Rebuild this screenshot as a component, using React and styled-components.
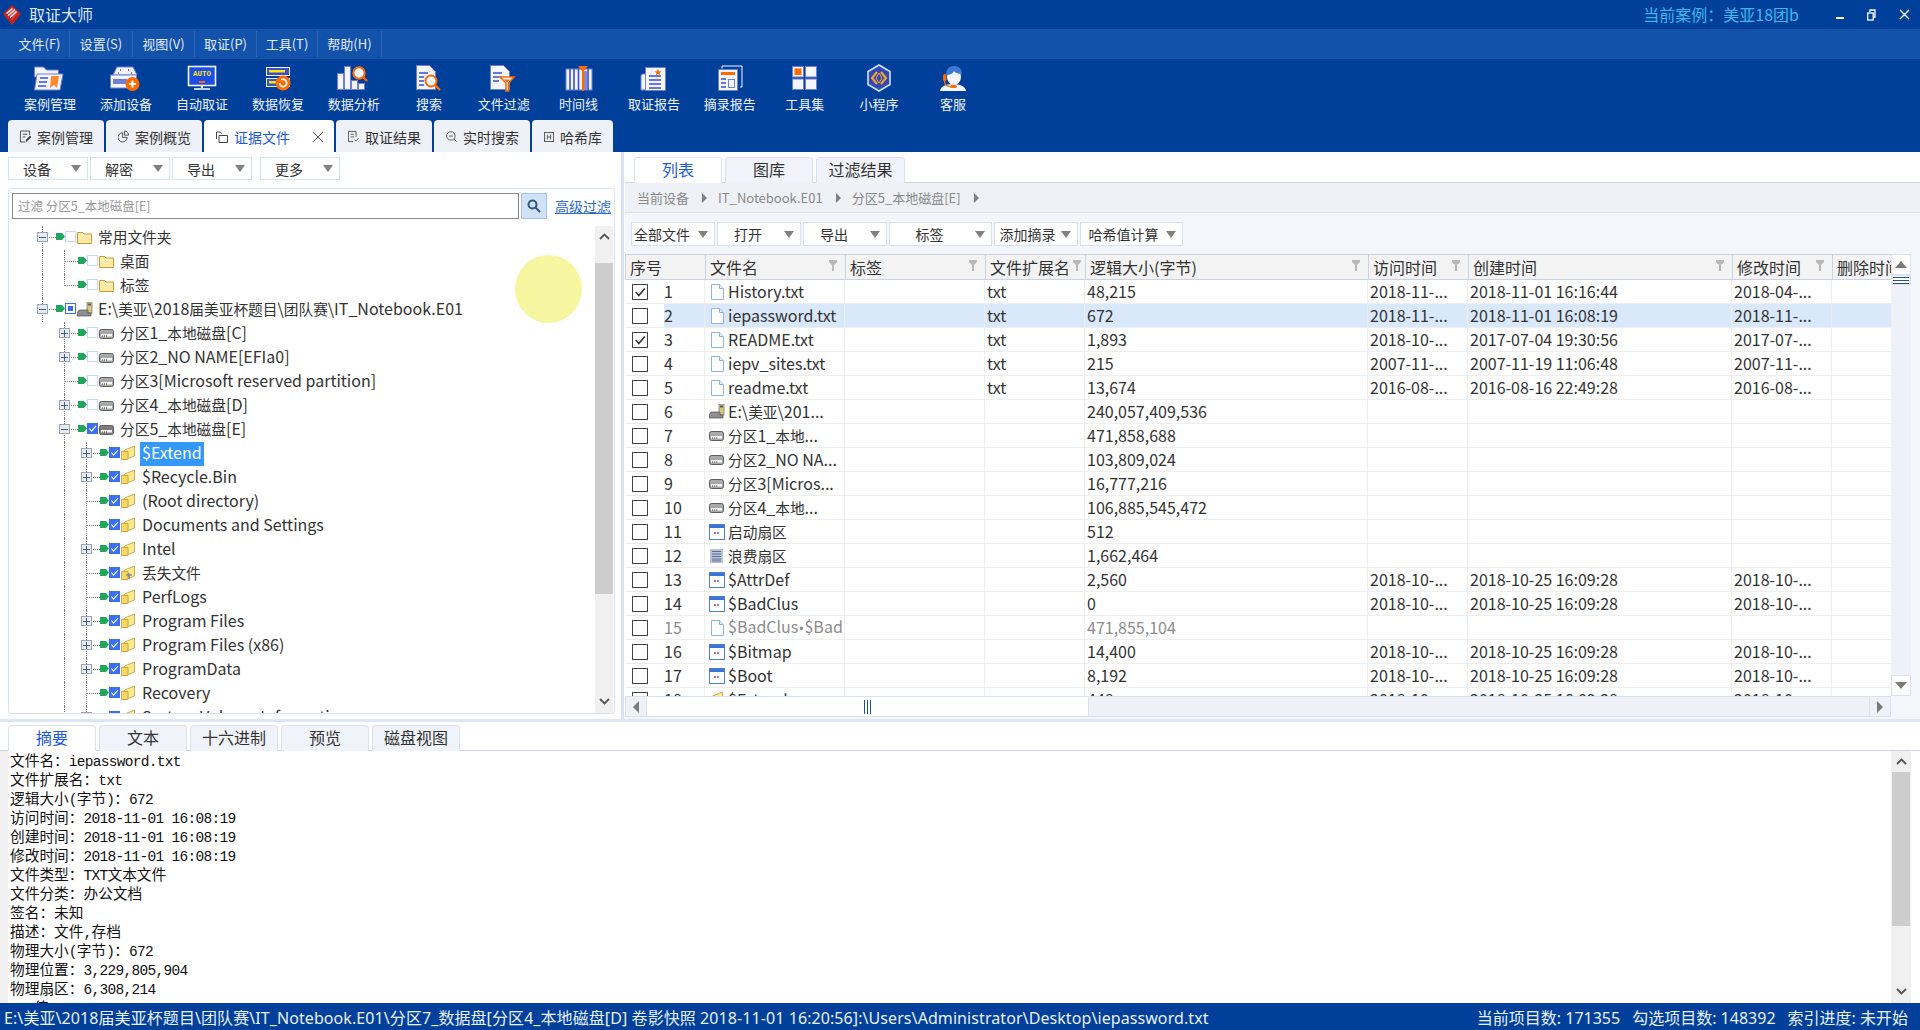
import React from 'react';
import styled, { createGlobalStyle } from 'styled-components';

const FONT = '"Noto Sans CJK SC", "Noto Sans", sans-serif';
const BLUE = '#00409b';
const LINE = '#d8e2f0';

const Global = createGlobalStyle`
  html, body { margin: 0; padding: 0; width: 1920px; height: 1030px; overflow: hidden; background: #fff; }
  * { box-sizing: border-box; }
`;

const Page = styled.div`
  width: 1920px; height: 1030px; display: flex; flex-direction: column; position: relative;
  font-family: ${FONT}; font-size: 16px; color: #333; background: #fff; overflow: hidden;
`;
const Han = styled.span`font-size: 14.7px; font-family: "Noto Sans CJK SC", sans-serif;`;
const Dot = styled.span`font-family: "Liberation Sans", sans-serif; font-size: 12px; margin: 0 1px;`;

/* ---------- title, menu ---------- */
const TitleBar = styled.div`
  height: 29px; background: ${BLUE}; display: flex; align-items: center; padding-left: 3px; color: #dbe6f6;
`;
const AppName = styled.span`margin-left: 8px; font-size: 16px; line-height: 29px;`;
const CaseName = styled.span`margin-left: auto; color: #3db8ef; font-size: 16px; line-height: 29px;`;
const WinButtons = styled.div`display: flex; align-items: center; margin-left: 37px; gap: 23px; padding-right: 10px; height: 29px;`;
const MenuBar = styled.div`height: 30px; background: #1252ab; display: flex; align-items: stretch; padding-top: 2px; padding-bottom: 2px;`;
const MenuItem = styled.div`
  display: flex; align-items: center; justify-content: center; width: ${p => p.$w}px; color: #e3ebf8; font-size: 13px;
  border-right: 1px solid #2d66b6; padding-bottom: 2px; padding-left: ${p => p.$pl || 0}px;
`;
const ToolBar = styled.div`height: 61px; background: ${BLUE}; display: flex; padding-left: 12px;`;
const Tool = styled.div`
  width: ${p => p.$w}px; flex: none; display: flex; flex-direction: column; align-items: center; padding-top: 5px; color: #eef3fb; font-size: 13px;
  span { line-height: 18px; margin-top: 3px; white-space: nowrap; }
  svg { display: block; }
`;

const TabStrip = styled.div`height: 32px; background: ${BLUE}; display: flex; gap: 2px; padding-left: 8px;`;
const MainTab = styled.div`
  width: ${p => p.$w}px; height: 32px; display: flex; align-items: center; gap: 6px; padding: 1px 11px 0 12px; font-size: 14px;
  border-radius: 4px 4px 0 0; background: ${p => (p.$active ? '#fff' : '#eef1f7')}; color: ${p => (p.$active ? '#1c58e2' : '#333')};
  white-space: nowrap;
  & > svg:last-child:not(:first-child) { margin-left: auto; }
`;

/* ---------- workspace ---------- */
const Workspace = styled.div`height: 567px; display: flex;`;
const LeftPane = styled.div`width: 621px; display: flex; flex-direction: column; padding: 5px 0 5px 8px;`;
const VSplit = styled.div`width: 3px; background: ${LINE};`;
const RightPane = styled.div`flex: 1; display: flex; flex-direction: column; padding-left: 1px; background: #fff;`;
const HSplit = styled.div`height: 3px; background: #dde6f3;`;

const ButtonRow = styled.div`display: flex; gap: ${p => p.$gap || 2}px;`;
const Drop = styled.div`
  width: ${p => p.$w}px; height: ${p => p.$h}px; margin-right: ${p => p.$after || 0}px; display: flex; align-items: center;
  background: #fff; border: 1px solid ${LINE}; font-size: 14px; color: #333; flex: none;
  span { flex: 1; text-align: center; white-space: nowrap; padding-right: ${p => p.$pr ?? 6}px; }
  i { width: 0; height: 0; margin-right: 6px; border-left: 5.5px solid transparent; border-right: 5.5px solid transparent; border-top: 7px solid #808080; flex: none; }
`;

const TreePanel = styled.div`
  margin-top: 8px; width: 607px; height: 526px; border: 1px solid ${LINE}; border-radius: 3px; display: flex; flex-direction: column; overflow: hidden;
`;
const FilterRow = styled.div`height: 37px; flex: none; display: flex; align-items: flex-start; padding: 4px 0 0 3px;`;
const FilterInput = styled.div`
  width: 507px; height: 26px; border: 1.5px solid #888; display: flex; align-items: center; padding: 0 0 2px 5px; color: #999; font-size: 12.5px; white-space: nowrap;
`;
const SearchBtn = styled.div`
  width: 26px; height: 26px; margin-left: 2px; background: #cfe2f8; border: 1px solid #a3c4ea; display: flex; align-items: center; justify-content: center;
`;
const AdvLink = styled.span`margin-left: 8px; font-size: 14px; line-height: 26px; color: #2a6bd8; text-decoration: underline; white-space: nowrap;`;
const TreeBody = styled.div`flex: 1; display: flex; min-height: 0;`;
const TreeList = styled.div`flex: 1; padding-left: 22px; overflow: hidden; min-width: 0;`;
const TreeRow = styled.div`height: 24px; display: flex; align-items: center; white-space: nowrap;`;
const Guide = styled.div`
  width: 22px; height: 24px; flex: none;
  &::before { content: ''; display: ${p => (p.$on ? 'block' : 'none')}; height: 100%; width: 0; margin-left: 11px; border-left: 1px dotted #7d7d7d; }
`;
const Conn = styled.div`
  width: 25px; height: 24px; flex: none; position: relative; display: flex; align-items: center;
  &::before { content: ''; position: absolute; left: 11px; top: 0; height: ${p => (p.$end ? '12px' : '24px')}; border-left: 1px dotted #7d7d7d; }
  &::after { content: ''; position: absolute; left: 12px; right: 0; top: 11px; border-top: 1px dotted #7d7d7d; }
`;
const Expander = styled.div`
  position: relative; z-index: 1; margin: -2px 0 0 6px; width: 11px; height: 10px; border: 1px solid #98a3b5; background: #e9ebef; display: flex; align-items: center; justify-content: center;
  svg { display: block; }
`;
const Marker = styled.svg`width: 9px; height: 7px; flex: none; margin-bottom: 3px;`;
const TreeCheck = styled.div`
  width: 11px; height: 11px; margin: 0 0 3px 0; flex: none; border: 1px solid ${p => (p.$s ? '#3b6ef0' : '#c6d6f4')};
  background: ${p => (p.$s === 'on' ? '#3b6ef0' : '#fff')}; display: flex; align-items: center; justify-content: center;
  svg { display: block; }
  b { display: block; width: 5px; height: 5px; background: #3b6ef0; }
`;
const TreeIcon = styled.span`width: 15px; height: 14px; margin: 0 6px 2px 1px; flex: none; svg { display: block; }`;
const TreeLabel = styled.span`
  height: 24px; line-height: 21px; padding: 0 2px; margin-left: -2px; font-size: 16px;
  background: ${p => (p.$sel ? '#3399ff' : 'transparent')}; color: ${p => (p.$sel ? '#fff' : '#333')};
`;
const GrayScroll = styled.div`
  width: 18px; margin-right: 1px; flex: none; background: #f0f0f0; display: flex; flex-direction: column; align-items: center;
`;
const Chevron = styled.div`
  height: ${p => p.$h}px; flex: none; display: flex; align-items: ${p => p.$align || 'center'}; justify-content: center; width: 100%;
  padding: ${p => p.$pt || 0}px 0 ${p => p.$pb || 0}px; svg { display: block; }
`;
const GrayThumb = styled.div`width: 18px; height: ${p => p.$h}px; flex: none; background: #cdcdcd;`;

const Spot = styled.div`
  position: absolute; left: 515px; top: 255px; width: 67px; height: 68px; border-radius: 50%; background: #f7f6a0; pointer-events: none;
`;

/* ---------- right pane ---------- */
const SubTabs = styled.div`height: 31px; flex: none; display: flex; gap: 3px; padding: 5px 0 0 9px; border-bottom: 1px solid #d0d4de;`;
const SubTab = styled.div`
  width: ${p => p.$w || 88}px; height: 26px; display: flex; align-items: center; justify-content: center; font-size: 16px; padding-bottom: 3px;
  border: 1px solid ${LINE}; border-bottom: none; border-radius: 4px 4px 0 0;
  background: ${p => (p.$active ? '#fff' : '#f0f3f9')}; color: ${p => (p.$active ? '#1c58e2' : '#333')};
`;
const Crumbs = styled.div`
  height: 30px; flex: none; background: #eef1f6; border-bottom: 1px solid ${LINE}; display: flex; align-items: center; padding-left: 12px; font-size: 13px; color: #8a8a8a; white-space: nowrap;
  i { width: 0; height: 0; margin: 0 11px 0 13px; border-top: 5px solid transparent; border-bottom: 5px solid transparent; border-left: 5px solid #808080; }
`;
const ListArea = styled.div`flex: 1; background: #f3f6fb; display: flex; flex-direction: column; min-height: 0;`;
const ListTools = styled.div`height: 41px; flex: none; display: flex; gap: 2px; padding: 9px 0 0 6px;`;
const TableWrap = styled.div`display: flex; width: 1286px; height: 442px; flex: none;`;
const TableCol = styled.div`width: 1266px; flex: none; display: flex; flex-direction: column; background: #fff; overflow: hidden;`;

const GRID = '39px 41px 140px 140px 100px 283px 100px 264px 100px 59px';
const HeadRow = styled.div`
  display: grid; grid-template-columns: 80px 140px 140px 100px 283px 100px 264px 100px 59px; height: 26px; flex: none;
  background: #f3f3f3; border-top: 1px solid #cbd3e3; border-bottom: 1px solid #cbd3e3; border-left: 1px solid #cbd3e3;
`;
const HeadCell = styled.div`
  display: flex; align-items: center; justify-content: space-between; padding: 0 0 0 4px; font-size: 16px; border-right: 1px solid #cbd3e3; overflow: hidden; white-space: nowrap; color: #333;
  svg { flex: none; margin: 0 ${p => (p.$tight ? 4 : 8)}px 4px ${p => (p.$tight ? -6 : 0)}px; position: relative; }
`;
const Row = styled.div`
  display: grid; grid-template-columns: ${GRID}; height: 24px; flex: none; border-bottom: 1px solid #eeeeee; color: ${p => (p.$dim ? '#8c8c8c' : '#333')};
`;
const Cell = styled.div`
  display: flex; align-items: center; padding-left: ${p => p.$pad ?? 2}px; overflow: hidden; white-space: nowrap; line-height: 23px;
  border-right: ${p => (p.$noLine ? 'none' : '1px solid #eeeeee')};
  background: ${p => (p.$sel ? '#d9e8fb' : 'transparent')};
`;
const RowCheck = styled.div`
  width: 16px; height: 16px; border: 1px solid #444; background: #fff; margin-left: 7px; display: flex; align-items: center; justify-content: center; svg { display: block; }
`;
const FileIcon = styled.span`width: 16px; height: 16px; flex: none; margin: 0 3px 0 0; svg { display: block; }`;
const NameText = styled.span`white-space: pre;`;

const VScroll = styled.div`width: 20px; flex: none; display: flex; flex-direction: column; background: #eef1f7;`;
const ScrollBtn = styled.div`
  width: 20px; height: ${p => p.$h}px; flex: none; border: 1px solid ${LINE}; background: #fff; display: flex; align-items: center; justify-content: center;
  svg { display: block; }
`;
const VTrack = styled.div`flex: 1; min-height: 0;`;
const HScroll = styled.div`width: 1266px; height: 21px; flex: none; display: flex; background: #eef1f7; border: 1px solid ${LINE};`;
const HThumb = styled.div`
  width: 442px; flex: none; background: #fff; border-right: 1px solid ${LINE}; display: flex; align-items: center; justify-content: center;
  svg { display: block; }
`;
const HBtn = styled.div`
  width: 21px; flex: none; background: ${p => (p.$plain ? '#fff' : '#eef1f7')}; display: flex; align-items: center; justify-content: center;
  border-${p => (p.$side === 'left' ? 'right' : 'left')}: 1px solid ${LINE};
  margin-${p => (p.$side === 'left' ? 'right' : 'left')}: ${p => (p.$side === 'left' ? 0 : 'auto')};
  svg { display: block; }
`;

/* ---------- bottom ---------- */
const DetailTabs = styled.div`height: 29px; flex: none; display: flex; gap: 3px; padding: 3px 0 0 8px; border-bottom: 1px solid #d0d4de;`;
const Detail = styled.div`height: 252px; flex: none; display: flex; overflow: hidden;`;
const Gutter = styled.div`width: 8px; flex: none; background: #f0f0f0;`;
const DetailText = styled.div`flex: 1; padding: 0 0 0 2px; font-size: 14.7px; color: #111; overflow: hidden; white-space: pre;`;
const DetailLine = styled.div`height: 19px; line-height: 18px;`;
const Mono = styled.span`font-family: "Liberation Mono", monospace; font-size: 14.5px; letter-spacing: -0.7px;`;
const DetailScroll = styled.div`
  width: 20px; flex: none; margin-right: 9px; background: #f0f0f0; display: flex; flex-direction: column; align-items: center;
`;
const StatusBar = styled.div`
  height: 27px; flex: none; background: ${BLUE}; color: #eaf0fa; display: flex; align-items: center; padding: 0 12px 0 4px; font-size: 16px; white-space: nowrap;
  font-family: "Noto Sans", "Noto Sans CJK SC", sans-serif;
`;
const StatusPath = styled.span`letter-spacing: 0.08px;`;
const StatusRight = styled.div`margin-left: auto; display: flex; gap: 12px;`;

/* ---------- drawings ---------- */
const W = '#f3f5ff', O = '#6f7fd2', B = '#3b4fd0', R = '#ff6a00', Y = '#ffe600';

const Ico = ({ children }) => <svg width="36" height="28" viewBox="0 0 36 28">{children}</svg>;

const toolIcons = [
  <Ico key="a">
    <path d="M2.5 3h9l3 3h12v7H2.5z" fill={W} stroke={O} />
    <path d="M5 10h26l-3 16H2.5z" fill={W} stroke={O} />
    <path d="M8 14h8M7 18h8M6 22h8" stroke={B} strokeWidth="1.6" />
    <path d="M19 12h8l-2 12-3-3-4 3z" fill="#ff8a30" />
  </Ico>,
  <Ico key="b">
    <path d="M5 11L9 3h16l4 8z" fill={W} stroke={O} />
    <rect x="2.5" y="11" width="26" height="13" fill={W} stroke={O} />
    <path d="M12 6h1M20 6h1M10 9h1M23 9h1" stroke={B} strokeWidth="1.6" />
    <rect x="5" y="15" width="14" height="5" fill="#6f7fd2" />
    <circle cx="24.5" cy="20" r="7" fill={R} />
    <path d="M21 20h7M24.5 16.5v7" stroke="#fff" strokeWidth="2" />
  </Ico>,
  <Ico key="c">
    <rect x="4.5" y="2.5" width="27" height="19" fill="#1a4ee6" stroke={W} strokeWidth="1.6" />
    <text x="18" y="12" textAnchor="middle" fontFamily="Liberation Mono, monospace" fontSize="7.5" fontWeight="700" fill={Y}>AUTO</text>
    <rect x="15" y="17" width="6" height="2" fill={R} />
    <path d="M17 22h2v2h-2z" fill={W} />
    <path d="M10 25h16" stroke={W} strokeWidth="1.6" />
  </Ico>,
  <Ico key="d">
    <rect x="6.5" y="3.5" width="23" height="8" fill={B} stroke={W} />
    <rect x="9" y="6" width="16" height="2.5" fill={Y} />
    <rect x="6.5" y="14.5" width="23" height="8" fill={B} stroke={W} />
    <rect x="9" y="17" width="10" height="2.5" fill={Y} />
    <circle cx="23" cy="19" r="7.5" fill={R} />
    <path d="M19.5 19a3.6 3.6 0 1 0 3.5-3.6h-2" fill="none" stroke="#fff" strokeWidth="1.7" />
  </Ico>,
  <Ico key="e">
    <rect x="1.5" y="9.5" width="6" height="16" fill={W} stroke={O} />
    <rect x="8.5" y="2.5" width="6" height="23" fill={W} stroke={O} />
    <rect x="15.5" y="16.5" width="6" height="9" fill={W} stroke={O} />
    <rect x="22.5" y="19.5" width="6" height="6" fill={W} stroke={O} />
    <circle cx="23" cy="9" r="5.7" fill={W} stroke={R} strokeWidth="2" />
    <path d="M27 13l4 4" stroke={R} strokeWidth="2.4" />
  </Ico>,
  <Ico key="f">
    <path d="M5.5 1.5h13l6 6v18h-19z" fill={W} stroke={O} />
    <path d="M8 9h9M8 13h5M8 17h5M8 21h5" stroke={B} strokeWidth="1.6" />
    <circle cx="20" cy="17" r="5.5" fill={W} stroke={R} strokeWidth="2" />
    <path d="M24 21l5 5" stroke={R} strokeWidth="2.4" />
  </Ico>,
  <Ico key="g">
    <path d="M4.5 1.5h13l6 6v18h-19z" fill={W} stroke={O} />
    <path d="M7 9h9M7 13h9M7 17h6" stroke={B} strokeWidth="1.6" />
    <path d="M14 13h14l-5.5 6v8h-2.5v-8z" fill={W} stroke={R} strokeWidth="1.6" />
    <path d="M18 15.5h6l-3 3z" fill={R} />
  </Ico>,
  <Ico key="h">
    <rect x="5" y="5" width="26" height="21" fill={W} stroke={O} />
    <path d="M9 5v21M13 5v21M17.5 5v21M27 5v21" stroke={B} strokeWidth="1.6" />
    <rect x="23" y="7" width="3" height="19" fill="#7f8ede" />
    <path d="M17 2h10l-5 6z" fill={R} />
    <rect x="21" y="7" width="2.2" height="20" fill={R} />
  </Ico>,
  <Ico key="i">
    <path d="M10 10H7a2 2 0 0 0-2 2v14h22" fill={W} stroke={O} />
    <rect x="9.5" y="3.5" width="20" height="23" fill={W} stroke={O} />
    <path d="M13 12h12M13 16h12M13 20h12M13 24h12" stroke={B} strokeWidth="1.6" />
    <path d="M22 5l1 2.2 2.3.2-1.7 1.5.5 2.3-2.1-1.2-2.1 1.2.5-2.3-1.7-1.5 2.3-.2z" fill={R} />
  </Ico>,
  <Ico key="j">
    <path d="M10 4.5V2h20v21h-2" fill="none" stroke={W} />
    <rect x="6.5" y="5.5" width="19" height="21" fill={W} stroke={O} />
    <rect x="9" y="8" width="14" height="3" fill={R} />
    <path d="M9 15h5M9 19h5M9 23h5" stroke={B} strokeWidth="1.6" />
    <rect x="16.5" y="15.5" width="6" height="8" fill={W} stroke={O} />
  </Ico>,
  <Ico key="k">
    <rect x="5.5" y="2.5" width="11" height="10.5" fill={W} stroke={O} />
    <rect x="7.5" y="4.5" width="7" height="6.5" fill={R} />
    <rect x="18.5" y="2.5" width="11" height="10.5" fill={W} stroke={O} />
    <rect x="5.5" y="15" width="11" height="10.5" fill={W} stroke={O} />
    <rect x="18.5" y="15" width="11" height="10.5" fill={W} stroke={O} />
  </Ico>,
  <Ico key="l">
    <path d="M18 1l11 6.5v13L18 27 7 20.500v-13z" fill="#3347b8" stroke="#cfe4ff" strokeWidth="1.6" />
    <path d="M16 8l-5 6 5 6M20 8l5 6-5 6" fill="none" stroke="#f5a91f" strokeWidth="2" />
    <path d="M18 9l-3 5 3 5 3-5z" fill="none" stroke="#f5a91f" strokeWidth="1" />
  </Ico>,
  <Ico key="m">
    <path d="M5 27c1-5 6-6.500 13-7 7 .5 12 2 13 7z" fill={W} />
    <ellipse cx="19" cy="13" rx="7" ry="8" fill={W} />
    <path d="M11 11c0-6 3-9 8-9s8 3 8 8c-3 0-7-1-8-3-1 2-3 4-8 4z" fill="#3d78d6" />
    <rect x="8" y="10" width="3.400" height="7" rx="1.500" fill={R} />
    <path d="M9.500 17c0 4 2 5.500 6 5.500" fill="none" stroke={R} strokeWidth="1.2" />
    <rect x="15" y="21" width="7" height="3" rx="1.500" fill={R} />
  </Ico>,
];

const Logo = () => (
  <svg width="18" height="20" viewBox="0 0 18 20">
    <path d="M9 0l9 9-9 11L0 9z" fill="#c8201e" />
    <path d="M9 2l6 6-6 7-3-3.500z" fill="#e23a30" />
    <path d="M3.500 8.500l6-5M5 10.500l7-6M7 12.500l6.500-6" stroke="#fff" strokeWidth="1.400" />
  </svg>
);

const Funnel = () => (
  <svg width="8" height="11" viewBox="0 0 8 11"><path d="M0 0h8v2L5 5v6H3V5L0 2z" fill="#b9b9b9" /></svg>
);

const FolderIcon = ({ open }) => (
  <svg width="15" height="14" viewBox="0 0 15 14">
    {open ? (
      <>
        <path d="M3.500 4l10-4v10l-10 4z" fill="#ffeb8c" stroke="#b99b3b" strokeWidth=".8" />
        <path d="M.5 5.500h6.500v8H.5z" fill="#fad864" stroke="#b99b3b" strokeWidth=".8" />
      </>
    ) : (
      <>
        <path d="M.5 2.500h5l1.500 1.500h7.500v9.500H.5z" fill="#ffe9a4" stroke="#c49a33" />
        <path d="M1.500 6h12" stroke="#fff6d0" />
      </>
    )}
  </svg>
);
const LostIcon = () => (
  <svg width="15" height="14" viewBox="0 0 15 14">
    <path d="M3.500 4l10-4v10l-10 4z" fill="#ffeb8c" stroke="#b99b3b" strokeWidth=".8" />
    <path d="M.5 5.500h6.500v8H.5z" fill="#fad864" stroke="#b99b3b" strokeWidth=".8" />
    <path d="M5 9h6M8 7v6" stroke="#8a8a8a" strokeWidth="1.500" />
  </svg>
);
const DiskIcon = ({ dark }) => (
  <svg width="15" height="14" viewBox="0 0 15 14">
    <rect x=".5" y="3.500" width="14" height="9" rx="2" fill={dark ? '#7e7e7e' : '#a8a8a8'} stroke="#5f5f5f" />
    <rect x="2" y="8" width="11" height="2.500" fill="#f4f4f4" />
    <path d="M3 10h6" stroke="#444" strokeDasharray="1 1" />
  </svg>
);
const ImageIcon = () => (
  <svg width="16" height="15" viewBox="0 0 16 15">
    <rect x="10" y="0" width="5" height="11" fill="#d9c87a" stroke="#6d6d6d" strokeWidth=".7" />
    <rect x="11" y="1.500" width="3" height="2" fill="#5b5b5b" />
    <path d="M2 8h9v3h3v3H0v-3z" fill="#8f8f8f" stroke="#4d4d4d" strokeWidth=".7" />
  </svg>
);
const PlainFile = () => (
  <svg width="16" height="16" viewBox="0 0 16 16">
    <path d="M2.500.5h8l4 4v11h-12z" fill="#fff" stroke="#8db4e2" />
    <path d="M10.500.5v4h4" fill="#e8f1fb" stroke="#8db4e2" />
  </svg>
);
const SysFile = () => (
  <svg width="16" height="16" viewBox="0 0 16 16">
    <rect x=".5" y=".5" width="15" height="15" fill="#fff" stroke="#4e80d0" />
    <rect x="1" y="1" width="14" height="3" fill="#3a74d8" />
    <path d="M5 9h2" stroke="#e06060" strokeWidth="2" />
    <path d="M8 9h2" stroke="#7090e0" strokeWidth="2" />
  </svg>
);
const ListFile = () => (
  <svg width="16" height="16" viewBox="0 0 16 16">
    <rect x="1" y="1" width="13" height="14" fill="#b9c3d6" />
    <path d="M3 3.500h9M3 6h9M3 8.500h9M3 11h9M3 13h9" stroke="#5a6f96" />
  </svg>
);
const Check = ({ c = '#fff', s = 9 }) => (
  <svg width={s} height={s} viewBox="0 0 10 10"><path d="M1.500 5l2.500 3 5-6" fill="none" stroke={c} strokeWidth="1.300" /></svg>
);
const Tri = ({ d }) => {
  const p = { up: 'M0 8l6-7 6 7z', down: 'M0 1h12L6 8z', left: 'M7 0v12L1 6z', right: 'M1 0v12l6-6z' }[d];
  const vert = d === 'up' || d === 'down';
  return <svg width={vert ? 12 : 8} height={vert ? 9 : 12} viewBox={vert ? '0 0 12 9' : '0 0 8 12'}><path d={p} fill="#7a7a7a" /></svg>;
};
const Chev = ({ d }) => (
  <svg width="11" height="7" viewBox="0 0 11 7">
    <path d={d === 'up' ? 'M1 6l4.500-4.500L10 6' : 'M1 1l4.500 4.500L10 1'} fill="none" stroke="#555" strokeWidth="1.800" />
  </svg>
);

const tabIcon = {
  edit: <svg width="12" height="13" viewBox="0 0 12 13" fill="none" stroke="#444"><path d="M10.500 5V.5h-10v12h5M3 4h5M3 7h3" /><path d="M6.500 12l.5-2 4-4 1 1-4 4z" fill="#444" /></svg>,
  pie: <svg width="12" height="13" viewBox="0 0 12 13" fill="none" stroke="#444"><path d="M5 2.500a5 5 0 1 0 5 5H5z" /><path d="M7 .5a4.500 4.500 0 0 1 4.500 4.500H7z" /></svg>,
  files: <svg width="12" height="12" viewBox="0 0 12 12" fill="none" stroke="#444"><path d="M.5 8V1h4l1 1.500" /><path d="M3 4.500h8.500v7H3z" /></svg>,
  result: <svg width="13" height="13" viewBox="0 0 13 13" fill="none" stroke="#444"><path d="M6 12.500H.5V.5h9V7M3 4h4M3 7h4M7.500 10l2 2 3-3.500" /></svg>,
  search: <svg width="13" height="13" viewBox="0 0 13 13" fill="none" stroke="#444"><circle cx="5.800" cy="5.800" r="5" /><path d="M9.500 9.500l3 3M3.500 6h4.500" /></svg>,
  hash: <svg width="12" height="12" viewBox="0 0 12 12" fill="none" stroke="#444"><rect x=".5" y=".5" width="11" height="11" /><path d="M4 3v6M8 3v6M4 6h4" /></svg>,
};

/* ---------- data ---------- */
const menus = [['文件(F)', 70, 10], ['设置(S)', 63], ['视图(V)', 62], ['取证(P)', 62], ['工具(T)', 61], ['帮助(H)', 64]];
const tools = [
  ['案例管理', 76], ['添加设备', 76], ['自动取证', 76], ['数据恢复', 76], ['数据分析', 75.5], ['搜索', 75], ['文件过滤', 74.5],
  ['时间线', 75], ['取证报告', 76], ['摘录报告', 75.5], ['工具集', 74.5], ['小程序', 74], ['客服', 74],
];
const mainTabs = [
  ['案例管理', 96, 'edit'], ['案例概览', 96, 'pie'], ['证据文件', 130, 'files', true], ['取证结果', 96, 'result'], ['实时搜索', 96, 'search'], ['哈希库', 81, 'hash'],
];

const tree = [
  { g: [], c: 'minus', s: '', i: 'folder', t: '常用文件夹' },
  { g: [true], c: 'leaf', s: '', i: 'folder', t: '桌面' },
  { g: [true], c: 'end', s: '', i: 'folder', t: '标签' },
  { g: [], c: 'minus', s: 'part', i: 'image', t: 'E:\\美亚\\2018届美亚杯题目\\团队赛\\IT_Notebook.E01' },
  { g: [false], c: 'plus', s: '', i: 'disk', t: '分区1_本地磁盘[C]' },
  { g: [false], c: 'plus', s: '', i: 'disk', t: '分区2_NO NAME[EFIa0]' },
  { g: [false], c: 'leaf', s: '', i: 'disk', t: '分区3[Microsoft reserved partition]' },
  { g: [false], c: 'plus', s: '', i: 'disk', t: '分区4_本地磁盘[D]' },
  { g: [false], c: 'minus', s: 'on', i: 'diskd', t: '分区5_本地磁盘[E]' },
  { g: [false, true], c: 'plus', s: 'on', i: 'open', t: '$Extend', sel: true },
  { g: [false, true], c: 'plus', s: 'on', i: 'open', t: '$Recycle.Bin' },
  { g: [false, true], c: 'leaf', s: 'on', i: 'open', t: '(Root directory)' },
  { g: [false, true], c: 'leaf', s: 'on', i: 'open', t: 'Documents and Settings' },
  { g: [false, true], c: 'plus', s: 'on', i: 'open', t: 'Intel' },
  { g: [false, true], c: 'leaf', s: 'on', i: 'lost', t: '丢失文件' },
  { g: [false, true], c: 'leaf', s: 'on', i: 'open', t: 'PerfLogs' },
  { g: [false, true], c: 'plus', s: 'on', i: 'open', t: 'Program Files' },
  { g: [false, true], c: 'plus', s: 'on', i: 'open', t: 'Program Files (x86)' },
  { g: [false, true], c: 'plus', s: 'on', i: 'open', t: 'ProgramData' },
  { g: [false, true], c: 'leaf', s: 'on', i: 'open', t: 'Recovery' },
  { g: [false, true], c: 'plus', s: 'on', i: 'open', t: 'System Volume Information' },
];

const treeIcons = {
  folder: <FolderIcon />, open: <FolderIcon open />, lost: <LostIcon />, disk: <DiskIcon />, diskd: <DiskIcon dark />, image: <ImageIcon />,
};
const fileIcons = { file: <PlainFile />, image: <ImageIcon />, disk: <DiskIcon />, sys: <SysFile />, list: <ListFile />, open: <FolderIcon open /> };

const D25 = '2018-10-25 16:09:28';
const rows = [
  ['file', 'History.txt', 'txt', '48,215', '2018-11-...', '2018-11-01 16:16:44', '2018-04-...', { on: true }],
  ['file', 'iepassword.txt', 'txt', '672', '2018-11-...', '2018-11-01 16:08:19', '2018-11-...', { sel: true }],
  ['file', 'README.txt', 'txt', '1,893', '2018-10-...', '2017-07-04 19:30:56', '2017-07-...', { on: true }],
  ['file', 'iepv_sites.txt', 'txt', '215', '2007-11-...', '2007-11-19 11:06:48', '2007-11-...'],
  ['file', 'readme.txt', 'txt', '13,674', '2016-08-...', '2016-08-16 22:49:28', '2016-08-...'],
  ['image', 'E:\\美亚\\201...', '', '240,057,409,536', '', '', ''],
  ['disk', '分区1_本地...', '', '471,858,688', '', '', ''],
  ['disk', '分区2_NO NA...', '', '103,809,024', '', '', ''],
  ['disk', '分区3[Micros...', '', '16,777,216', '', '', ''],
  ['disk', '分区4_本地...', '', '106,885,545,472', '', '', ''],
  ['sys', '启动扇区', '', '512', '', '', ''],
  ['list', '浪费扇区', '', '1,662,464', '', '', ''],
  ['sys', '$AttrDef', '', '2,560', '2018-10-...', D25, '2018-10-...'],
  ['sys', '$BadClus', '', '0', '2018-10-...', D25, '2018-10-...'],
  ['file', '$BadClus•$Bad', '', '471,855,104', '', '', '', { dim: true }],
  ['sys', '$Bitmap', '', '14,400', '2018-10-...', D25, '2018-10-...'],
  ['sys', '$Boot', '', '8,192', '2018-10-...', D25, '2018-10-...'],
  ['open', '$Extend', '', '448', '2018-10-...', D25, '2018-10-...'],
];

const headers = [
  ['序号', false], ['文件名', true], ['标签', true], ['文件扩展名', true, true], ['逻辑大小(字节)', true], ['访问时间', true], ['创建时间', true], ['修改时间', true], ['删除时间', false],
];

const details = [
  '文件名：iepassword.txt', '文件扩展名：txt', '逻辑大小(字节)：672', '访问时间：2018-11-01 16:08:19', '创建时间：2018-11-01 16:08:19', '修改时间：2018-11-01 16:08:19',
  '文件类型：TXT文本文件', '文件分类：办公文档', '签名：未知', '描述：文件,存档', '物理大小(字节)：672', '物理位置：3,229,805,904', '物理扇区：6,308,214', 'MD5值：',
];

const statusPath = 'E:\\美亚\\2018届美亚杯题目\\团队赛\\IT_Notebook.E01\\分区7_数据盘[分区4_本地磁盘[D] 卷影快照 2018-11-01 16:20:56]:\\Users\\Administrator\\Desktop\\iepassword.txt';

const runs = s => s.split(/([\x20-\x7e]+)/).map((part, i) => (i % 2 ? <Mono key={i}>{part}</Mono> : part));

/* names mix smaller Han with 16px Latin, as the reference does */
const mixed = s => s.split(/([\u4e00-\u9fff]+|•)/).map((part, i) => {
  if (!(i % 2)) return part;
  return part === '•' ? <Dot key={i}>•</Dot> : <Han key={i}>{part}</Han>;
});

const TreeNode = ({ n }) => (
  <TreeRow>
    {n.g.map((on, i) => <Guide key={i} $on={on} />)}
    <Conn $end={n.c === 'end'}>
      {(n.c === 'plus' || n.c === 'minus') && (
        <Expander>
          <svg width="7" height="7" viewBox="0 0 7 7">
            <path d={n.c === 'plus' ? 'M0 3.500h7M3.500 0v7' : 'M0 3.500h7'} stroke="#3f5f92" />
          </svg>
        </Expander>
      )}
    </Conn>
    <Marker viewBox="0 0 9 7"><path d="M0 0h6L9 3.500 6 7H0z" fill="#1fa65a" /></Marker>
    <TreeCheck $s={n.s}>
      {n.s === 'on' && <Check s={9} />}
      {n.s === 'part' && <b />}
    </TreeCheck>
    <TreeIcon>{treeIcons[n.i]}</TreeIcon>
    <TreeLabel $sel={n.sel}>{mixed(n.t)}</TreeLabel>
  </TreeRow>
);

const TableRow = ({ n, r }) => {
  const [icon, name, ext, size, at, ct, mt, f = {}] = r;
  return (
    <Row $dim={f.dim}>
      <Cell $noLine $pad={0}><RowCheck>{f.on && <Check c="#333" s={12} />}</RowCheck></Cell>
      <Cell $sel={f.sel} $pad={0}>{n}</Cell>
      <Cell $sel={f.sel} $pad={4}><FileIcon>{fileIcons[icon]}</FileIcon><NameText>{mixed(name)}</NameText></Cell>
      <Cell $sel={f.sel} />
      <Cell $sel={f.sel}>{ext}</Cell>
      <Cell $sel={f.sel}>{size}</Cell>
      <Cell $sel={f.sel}>{at}</Cell>
      <Cell $sel={f.sel}>{ct}</Cell>
      <Cell $sel={f.sel}>{mt}</Cell>
      <Cell $sel={f.sel} $noLine />
    </Row>
  );
};

export default function App() {
  return (
    <Page>
      <Global />
      <TitleBar>
        <Logo />
        <AppName>取证大师</AppName>
        <CaseName>当前案例：美亚18团b</CaseName>
        <WinButtons>
          <svg width="8" height="10" viewBox="0 0 8 10"><path d="M0 8h8" stroke="#fff" strokeWidth="2" /></svg>
          <svg width="9" height="12" viewBox="0 0 9 12" fill="none" stroke="#fff" strokeWidth="1.300"><path d="M3 3V1h5v7H6" /><rect x=".7" y="4" width="5.500" height="7" /></svg>
          <svg width="11" height="11" viewBox="0 0 11 11"><path d="M1 1l9 9M10 1l-9 9" stroke="#fff" strokeWidth="1.400" /></svg>
        </WinButtons>
      </TitleBar>
      <MenuBar>
        {menus.map(([t, w, pl]) => <MenuItem key={t} $w={w} $pl={pl}>{t}</MenuItem>)}
      </MenuBar>
      <ToolBar>
        {tools.map(([t, w], i) => <Tool key={t} $w={w}>{toolIcons[i]}<span>{t}</span></Tool>)}
      </ToolBar>
      <TabStrip>
        {mainTabs.map(([t, w, ic, active]) => (
          <MainTab key={t} $w={w} $active={active}>
            {tabIcon[ic]}
            {t}
            {active && <svg width="10" height="10" viewBox="0 0 10 10"><path d="M0 0l10 10M10 0L0 10" stroke="#555" /></svg>}
          </MainTab>
        ))}
      </TabStrip>

      <Workspace>
        <LeftPane>
          <ButtonRow>
            <Drop $w={80} $h={23}><span>设备</span><i /></Drop>
            <Drop $w={80} $h={23}><span>解密</span><i /></Drop>
            <Drop $w={80} $h={23} $after={6}><span>导出</span><i /></Drop>
            <Drop $w={80} $h={23}><span>更多</span><i /></Drop>
          </ButtonRow>
          <TreePanel>
            <FilterRow>
              <FilterInput>过滤 分区5_本地磁盘[E]</FilterInput>
              <SearchBtn>
                <svg width="14" height="14" viewBox="0 0 14 14" fill="none" stroke="#33567f" strokeWidth="2"><circle cx="5.500" cy="5.500" r="4" /><path d="M8.500 8.500l4.500 4.500" /></svg>
              </SearchBtn>
              <AdvLink>高级过滤</AdvLink>
            </FilterRow>
            <TreeBody>
              <TreeList>
                {tree.map(n => <TreeNode key={n.t} n={n} />)}
              </TreeList>
              <GrayScroll>
                <Chevron $h={37} $align="flex-start" $pt={7}><Chev d="up" /></Chevron>
                <GrayThumb $h={331} />
                <Chevron $h={118} $align="flex-end" $pb={7}><Chev d="down" /></Chevron>
              </GrayScroll>
            </TreeBody>
          </TreePanel>
        </LeftPane>
        <VSplit />
        <RightPane>
          <SubTabs>
            <SubTab $active>列表</SubTab>
            <SubTab>图库</SubTab>
            <SubTab $w={89}>过滤结果</SubTab>
          </SubTabs>
          <Crumbs>
            当前设备<i />IT_Notebook.E01<i />分区5_本地磁盘[E]<i />
          </Crumbs>
          <ListArea>
            <ListTools>
              <Drop $w={84} $h={24}><span>全部文件</span><i /></Drop>
              <Drop $w={84} $h={24}><span>打开</span><i /></Drop>
              <Drop $w={84} $h={24}><span>导出</span><i /></Drop>
              <Drop $w={103} $h={24}><span>标签</span><i /></Drop>
              <Drop $w={84} $h={24} $pr={1}><span>添加摘录</span><i /></Drop>
              <Drop $w={103} $h={24} $pr={0}><span>哈希值计算</span><i /></Drop>
            </ListTools>
            <TableWrap>
              <TableCol>
                <HeadRow>
                  {headers.map(([t, f, tight]) => (
                    <HeadCell key={t} $tight={tight}>{t}{f && <Funnel />}</HeadCell>
                  ))}
                </HeadRow>
                {rows.map((r, i) => <TableRow key={i} n={i + 1} r={r} />)}
              </TableCol>
              <VScroll>
                <ScrollBtn $h={21}><Tri d="up" /></ScrollBtn>
                <ScrollBtn $h={10}>
                  <svg width="16" height="7" viewBox="0 0 16 7"><path d="M0 .5h16M0 3.500h16M0 6.500h16" stroke="#1d4f9c" /></svg>
                </ScrollBtn>
                <VTrack />
                <ScrollBtn $h={21}><Tri d="down" /></ScrollBtn>
              </VScroll>
            </TableWrap>
            <HScroll>
              <HBtn $side="left"><Tri d="left" /></HBtn>
              <HThumb>
                <svg width="7" height="14" viewBox="0 0 7 14"><path d="M.5 0v14M3.500 0v14M6.500 0v14" stroke="#1d4f9c" /></svg>
              </HThumb>
              <HBtn $side="right"><Tri d="right" /></HBtn>
            </HScroll>
          </ListArea>
        </RightPane>
      </Workspace>
      <HSplit />
      <DetailTabs>
        <SubTab $active $w={88}>摘要</SubTab>
        <SubTab $w={88}>文本</SubTab>
        <SubTab $w={88}>十六进制</SubTab>
        <SubTab $w={88}>预览</SubTab>
        <SubTab $w={88}>磁盘视图</SubTab>
      </DetailTabs>
      <Detail>
        <Gutter />
        <DetailText>
          {details.map(d => <DetailLine key={d}>{runs(d)}</DetailLine>)}
        </DetailText>
        <DetailScroll>
          <Chevron $h={21}><Chev d="up" /></Chevron>
          <GrayThumb $h={154} />
          <Chevron $h={77} $align="flex-end" $pb={8}><Chev d="down" /></Chevron>
        </DetailScroll>
      </Detail>
      <StatusBar>
        <StatusPath>{statusPath}</StatusPath>
        <StatusRight>
          <span>当前项目数: 171355</span>
          <span>勾选项目数: 148392</span>
          <span>索引进度: 未开始</span>
        </StatusRight>
      </StatusBar>
      <Spot />
    </Page>
  );
}
